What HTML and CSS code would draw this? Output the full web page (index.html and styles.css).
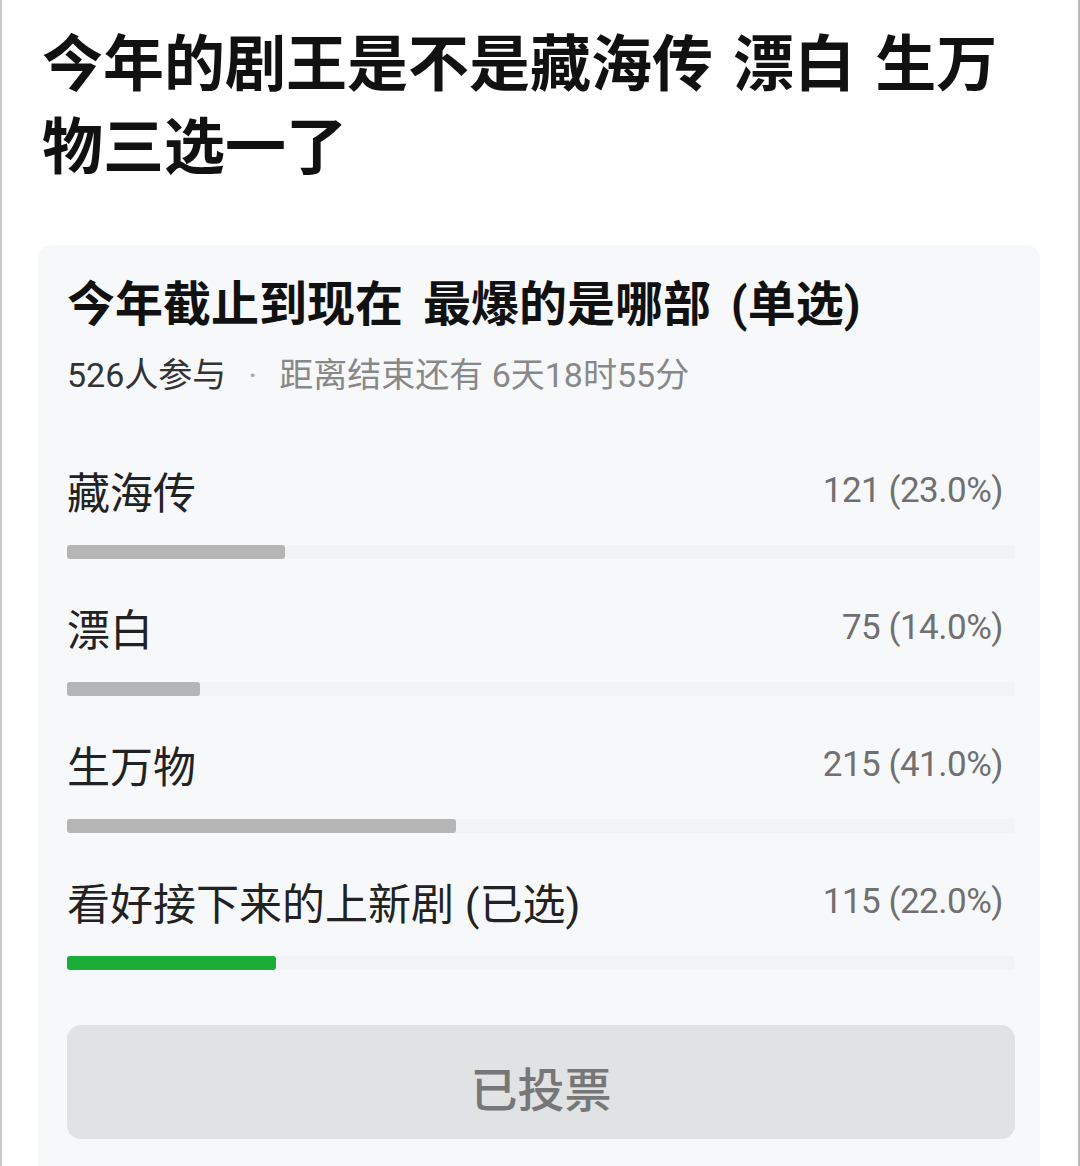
FILE: index.html
```html
<html>
  <head>
    <meta charset="utf-8">
    <title>投票</title>
    <link rel="stylesheet" href="styles.css">
  </head>
  <body>
    <div class="page">
      <h1 class="post-title">今年的剧王是不是藏海传 漂白 生万物三选一了</h1>

      <div class="poll">
        <div class="poll-title">今年截止到现在 最爆的是哪部 (单选)</div>
        <div class="poll-meta">
          <span class="joined">526人参与</span>
          <span class="dot">·</span>
          <span>距离结束还有 6天18时55分</span>
        </div>

        <div class="options">
          <div class="option">
            <div class="option-row">
              <span class="label">藏海传</span>
              <span class="count">121 (23.0%)</span>
            </div>
            <div class="track"><div class="fill" style="width: 23%"></div></div>
          </div>
          <div class="option">
            <div class="option-row">
              <span class="label">漂白</span>
              <span class="count">75 (14.0%)</span>
            </div>
            <div class="track"><div class="fill" style="width: 14%"></div></div>
          </div>
          <div class="option">
            <div class="option-row">
              <span class="label">生万物</span>
              <span class="count">215 (41.0%)</span>
            </div>
            <div class="track"><div class="fill" style="width: 41%"></div></div>
          </div>
          <div class="option">
            <div class="option-row">
              <span class="label">看好接下来的上新剧 (已选)</span>
              <span class="count">115 (22.0%)</span>
            </div>
            <div class="track"><div class="fill picked" style="width: 22%"></div></div>
          </div>
        </div>

        <div class="vote-btn">已投票</div>
      </div>
    </div>
  </body>
</html>
```

FILE: styles.css
```css
body{
  margin: 0;
  background: #fff;
  font-family: Roboto, "Noto Sans CJK SC", sans-serif;
}

.page{
  min-height: 1166px;
  box-sizing: border-box;
  border-left: 2px solid #c8c8c8;
  border-right: 2px solid #b8b8b8;
  padding-top: 24px;
}

.post-title{
  margin: 0 0 0 40px;
  width: 980px;
  font-size: 61px;
  line-height: 83px;
  font-weight: 700;
  word-spacing: 5px;
  color: #111;
}

.poll{
  margin: 55px 38px 0 36px;
  padding: 30px 25px 40px 29px;
  background: #f7f8f9;
  border-radius: 14px 14px 0 0;
  min-height: 900px;
  box-sizing: border-box;
}

.poll-title{
  font-size: 48px;
  line-height: 60px;
  font-weight: 700;
  word-spacing: 8px;
  color: #111;
}

.poll-meta{
  margin-top: 18px;
  font-size: 34px;
  line-height: 44px;
  color: #888;
  display: flex;
}

.joined{
  color: #333;
}

.dot{
  color: #aaa;
  margin: 0 22px;
}

.options{
  margin-top: 65px;
  display: flex;
  flex-direction: column;
  gap: 40px;
}

.option-row{
  display: flex;
  justify-content: space-between;
  align-items: center;
  height: 56px;
}

.label{
  font-size: 43px;
  color: #222;
}

.count{
  font-size: 35px;
  letter-spacing: -0.5px;
  color: #707070;
  padding-right: 12px;
}

.track{
  margin-top: 27px;
  height: 14px;
  background: #f2f3f4;
  border-radius: 3px;
}

.fill{
  height: 100%;
  background: #b5b5b5;
  border-radius: 3px;
}

.fill.picked{
  background: #1aad38;
}

.vote-btn{
  margin-top: 55px;
  height: 114px;
  box-sizing: border-box;
  padding-top: 8px;
  border-radius: 14px;
  background: #e1e2e3;
  display: flex;
  align-items: center;
  justify-content: center;
  font-size: 47px;
  font-weight: 500;
  color: #777;
}
```
